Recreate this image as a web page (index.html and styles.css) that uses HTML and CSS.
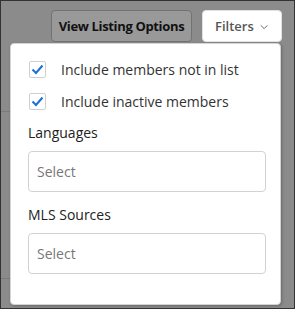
FILE: index.html
```html
<!DOCTYPE html>
<html lang="en">
<head>
  <meta charset="UTF-8">
  <title>Filters</title>
  <link rel="stylesheet" href="styles.css">
</head>
<body>
  <div class="toolbar">
    <button class="btn btn-dim">View Listing Options</button>
    <button class="btn btn-filters">Filters
      <svg class="chevron" width="10" height="6" viewBox="0 0 10 6"><path d="M1 1l4 4 4-4" fill="none" stroke="#666" stroke-width="1.2"/></svg>
    </button>
  </div>
  <!-- Filters dropdown -->
  <div class="panel">
    <label class="check-row">
      <span class="box">
        <svg width="13" height="11" viewBox="0 0 13 11"><path d="M1.5 5.5l3.5 3.5 6.5-7.5" fill="none" stroke="#1a6fd6" stroke-width="2"/></svg>
      </span>
      Include members not in list
    </label>
    <label class="check-row">
      <span class="box">
        <svg width="13" height="11" viewBox="0 0 13 11"><path d="M1.5 5.5l3.5 3.5 6.5-7.5" fill="none" stroke="#1a6fd6" stroke-width="2"/></svg>
      </span>
      Include inactive members
    </label>
    <div class="field">
      <div class="field-label">Languages</div>
      <div class="select">Select</div>
    </div>
    <div class="field">
      <div class="field-label">MLS Sources</div>
      <div class="select">Select</div>
    </div>
  </div>
</body>
</html>
```

FILE: styles.css
```css
/* General Styles */
html {
  background: #8b8b8b;
}
body {
  margin: 0;
  width: 293px;
  height: 307px;
  border: 1px solid #333;
  background-color: #8b8b8b;
  background-image:
    linear-gradient(#7a7a7a, #7a7a7a),
    linear-gradient(#7a7a7a, #7a7a7a);
  background-size: 10px 1px, 10px 1px;
  background-position: 0 110px, 0 277px;
  background-repeat: no-repeat;
  font-family: 'Open Sans', sans-serif;
  overflow: hidden;
}
.toolbar {
  display: flex;
  justify-content: flex-end;
  gap: 10px;
  padding: 9px 12px 0 0;
}
.btn {
  height: 32px;
  border-radius: 4px;
  font-family: 'Open Sans', sans-serif;
  font-size: 13px;
  padding: 0 9px;
  cursor: pointer;
}
.btn-dim {
  width: 141px;
  padding: 0;
  background: #999;
  border: 1px solid #727272;
  color: #111;
  font-weight: 700;
  letter-spacing: -0.35px;
}
.btn-filters {
  display: flex;
  align-items: center;
  gap: 6px;
  background: #fff;
  border: 1px solid #e2e2e2;
  color: #555;
  font-weight: 600;
  padding: 0 13px 0 12px;
  width: 80px;
}
.chevron {
  margin-top: 1px;
}
/* Dropdown */
.panel {
  display: flex;
  flex-direction: column;
  margin: 1px 0 0 9px;
  width: 271px;
  height: 262px;
  box-sizing: border-box;
  background: #fff;
  border: 1px solid #d4d4d4;
  border-radius: 4px;
  box-shadow: 1px 1px 3px rgba(0, 0, 0, 0.25);
  padding: 17px 14px 0 17px;
}
.check-row {
  display: flex;
  align-items: center;
  gap: 15px;
  height: 17px;
  margin-left: 1px;
  font-size: 14px;
  color: #333;
}
.check-row + .check-row {
  margin-top: 15px;
}
.box {
  width: 15px;
  height: 15px;
  border: 1px solid #cfcfcf;
  border-radius: 2px;
  display: flex;
  align-items: center;
  justify-content: center;
  flex-shrink: 0;
}
.field {
  margin-top: 13px;
}
.field-label {
  font-size: 14px;
  font-weight: 500;
  line-height: 20px;
  color: #222;
  margin-bottom: 8px;
}
.select {
  height: 41px;
  box-sizing: border-box;
  border: 1px solid #d2d2d2;
  border-radius: 4px;
  padding: 0 8px;
  display: flex;
  align-items: center;
  font-size: 14px;
  color: #777;
}
```
